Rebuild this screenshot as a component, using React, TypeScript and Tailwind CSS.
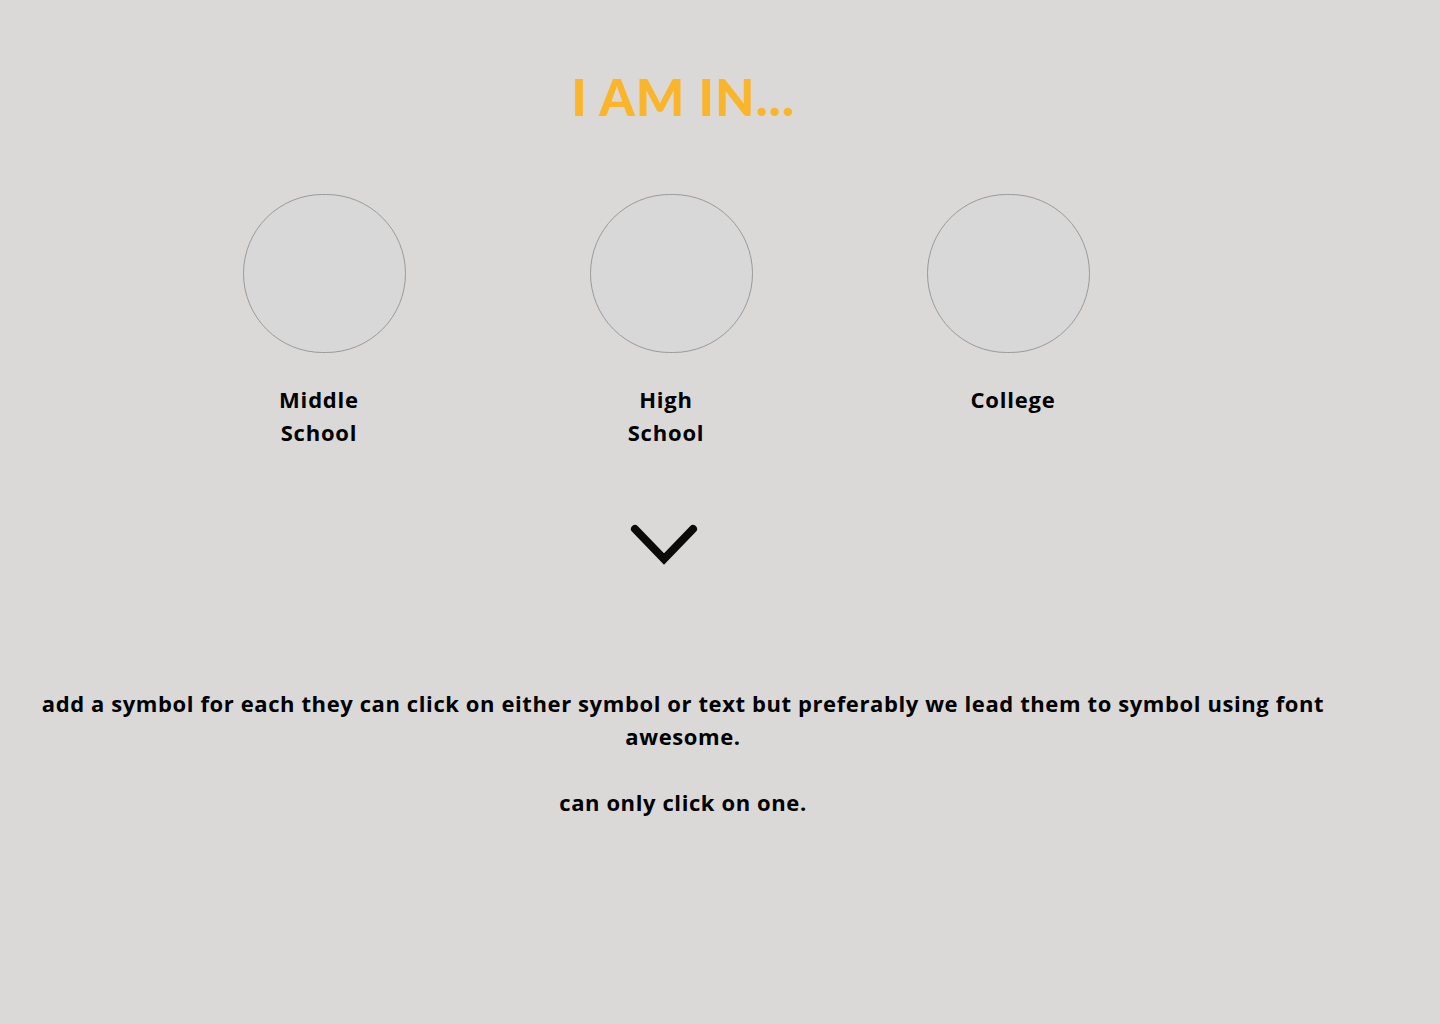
import React from 'react';

const levels = [
  { label: ['Middle', 'School'], gap: 'ml-0', shift: '-translate-x-[5px]' },
  { label: ['High', 'School'], gap: 'ml-[147px]', shift: '-translate-x-[5px]' },
  { label: ['College'], gap: 'ml-[137px]', shift: 'translate-x-[5px]' },
];

const LevelOption: React.FC<{ label: string[]; gap: string; shift: string }> = ({ label, gap, shift }) => (
  <button className={`flex w-[200px] flex-col items-center ${gap}`}>
    <span className="block h-[159px] w-[163px] rounded-full border border-[#9a9a9a] bg-[#d8d8d8]" />
    <span className={`mt-[30px] text-[22px] font-bold leading-[33px] tracking-[0.8px] text-black ${shift}`}>
      {label.map((line) => (
        <span key={line} className="block">{line}</span>
      ))}
    </span>
  </button>
);

export default function App() {
  return (
    <div className="min-h-[1024px] w-full bg-[#dad9d7] font-['Open_Sans','Liberation_Sans',sans-serif]">
      <div className="flex w-[1366px] flex-col">
        <h1 className="mt-[67px] text-center font-['Lato','Liberation_Sans',sans-serif] text-[51px] font-black leading-[60px] tracking-[1px] text-[#fbb52a]">
          I AM IN...
        </h1>

        <div className="mt-[67px] flex pl-[224px]">
          {levels.map((l) => (
            <LevelOption key={l.label.join(' ')} label={l.label} gap={l.gap} shift={l.shift} />
          ))}
        </div>

        <div className="mt-[75px] flex justify-center pr-[36px]">
          <svg width="70" height="44" viewBox="0 0 70 44" fill="none">
            <path d="M5 5 L34 35 L63 5" stroke="#0a0a0a" strokeWidth="8" strokeLinecap="round" strokeLinejoin="miter" />
          </svg>
        </div>

        <div className="mx-auto mt-[119px] w-[1300px] text-center text-[22px] font-bold leading-[33px] tracking-[0.6px] text-black">
          <p>add a symbol for each they can click on either symbol or text but preferably we lead them to symbol using font awesome.</p>
          <p className="mt-[33px]">can only click on one.</p>
        </div>
      </div>
    </div>
  );
}
